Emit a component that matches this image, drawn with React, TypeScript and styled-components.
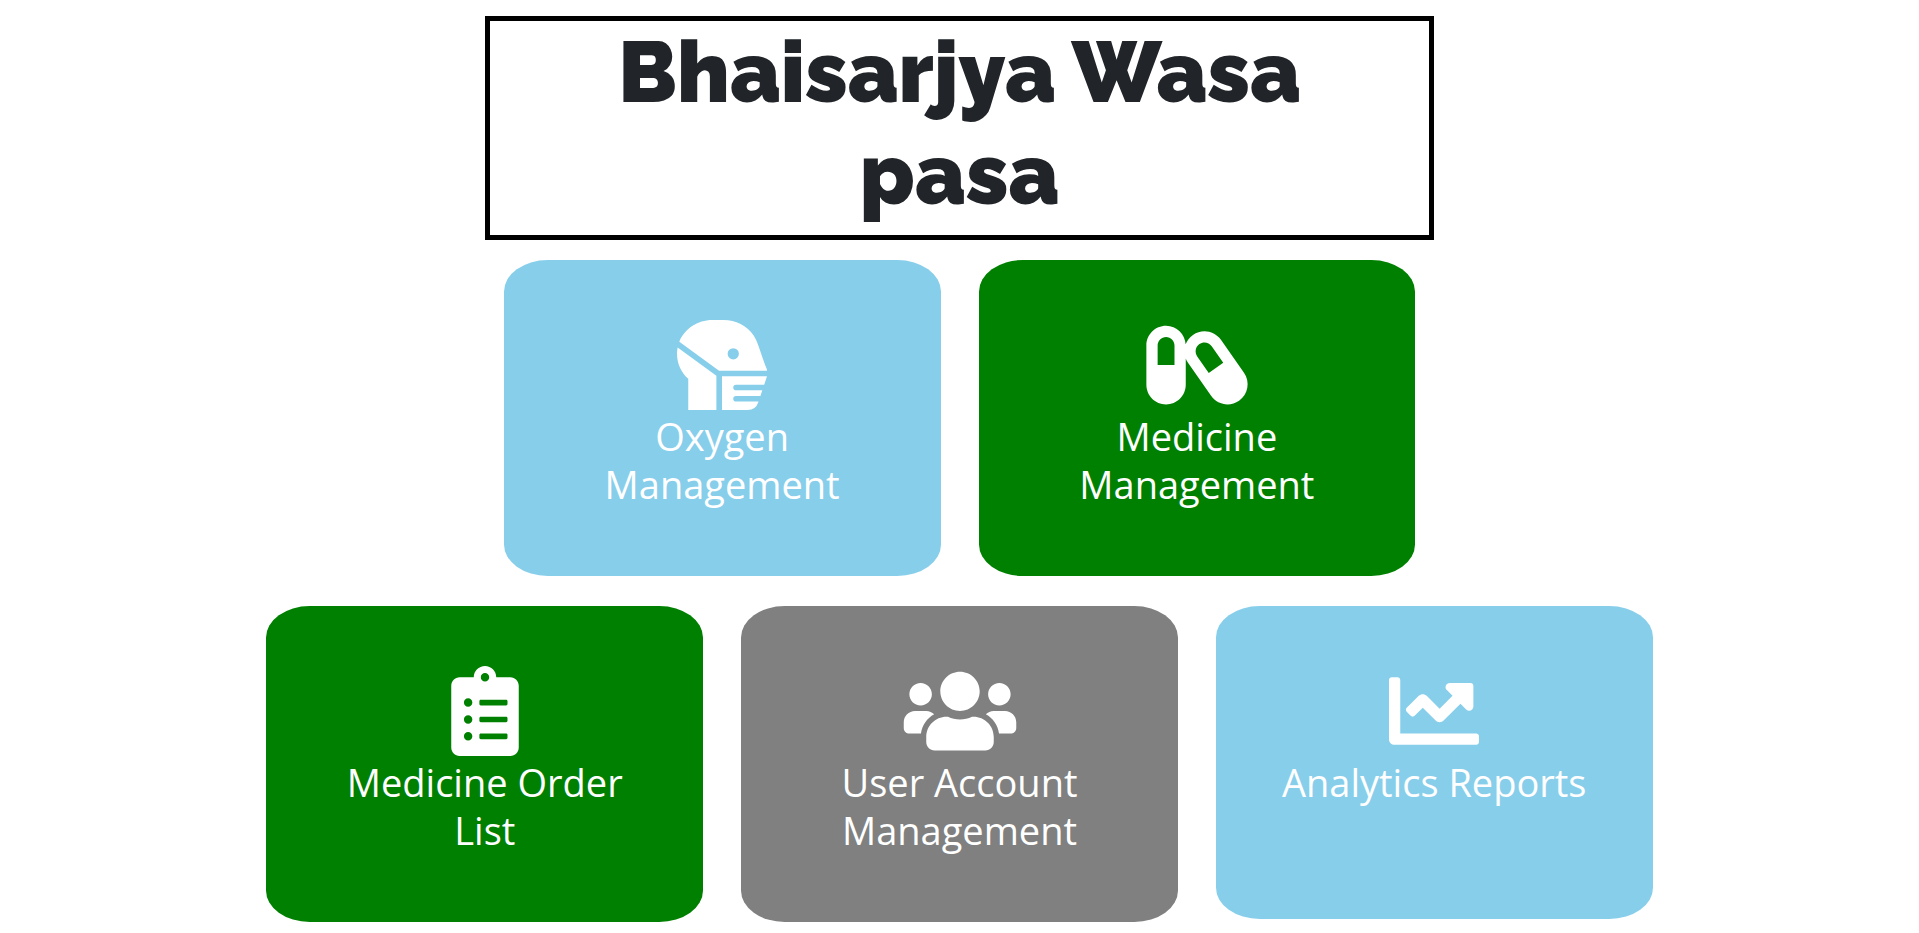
import React from "react";
import styled, { createGlobalStyle } from "styled-components";
import type { IconType } from "react-icons";
import { FaCapsules, FaChartLine, FaClipboardList, FaHeadSideMask, FaUsers } from "react-icons/fa";

const GlobalStyle = createGlobalStyle`
  *, *::before, *::after { box-sizing: border-box; }
  body {
    margin: 0;
    background: #fff;
    color: #212529;
    font-family: "Segoe UI", "Open Sans", "Noto Sans", sans-serif;
  }
`;

const Page = styled.main`
  display: flex;
  flex-direction: column;
  align-items: center;
  padding: 16px 10px 11px;
`;

const Banner = styled.header`
  width: 50%;
  margin-bottom: 20px;
  padding: 0 60px 10px;
  border: 5px solid #000;

  @media (max-width: 1200px) {
    width: 100%;
  }
`;

const Title = styled.h1`
  margin: 0;
  font-family: Raleway, Lato, sans-serif;
  font-size: 85px;
  font-weight: 900;
  line-height: 102px;
  text-align: center;
`;

const Menu = styled.nav`
  display: flex;
  flex-direction: column;
  gap: 30px;
  width: 100%;
`;

const Row = styled.div`
  display: flex;
  flex-wrap: wrap;
  justify-content: center;
  align-items: flex-start;
  row-gap: 30px;
`;

const Cell = styled.div`
  flex: 0 0 25%;
  min-width: 360px;
  padding: 0 19px;
`;

const Card = styled.a<{ $color: string }>`
  display: flex;
  flex-direction: column;
  align-items: center;
  gap: 2px;
  min-height: 313px;
  padding: 60px 60px 68px;
  border-radius: 10%;
  background: ${(p) => p.$color};
  color: #fff;
  text-align: center;
  text-decoration: none;

  /* Wide enough for the broadest icon; the others scale to the height. */
  svg {
    width: 120px;
    height: 90px;
  }
`;

const Label = styled.span`
  font-size: 38px;
  line-height: 48px;
`;

type Item = { label: string; color: string; icon: IconType };

const rows: Item[][] = [
  [
    { label: "Oxygen Management", color: "skyblue", icon: FaHeadSideMask },
    { label: "Medicine Management", color: "green", icon: FaCapsules },
  ],
  [
    { label: "Medicine Order List", color: "green", icon: FaClipboardList },
    { label: "User Account Management", color: "gray", icon: FaUsers },
    { label: "Analytics Reports", color: "skyblue", icon: FaChartLine },
  ],
];

export default function App() {
  return (
    <>
      <GlobalStyle />
      <Page>
        <Banner>
          <Title>Bhaisarjya Wasa pasa</Title>
        </Banner>
        <Menu>
          {rows.map((items, i) => (
            <Row key={i}>
              {items.map(({ label, color, icon: Icon }) => (
                <Cell key={label}>
                  <Card href="#" $color={color}>
                    <Icon aria-hidden="true" />
                    <Label>{label}</Label>
                  </Card>
                </Cell>
              ))}
            </Row>
          ))}
        </Menu>
      </Page>
    </>
  );
}
